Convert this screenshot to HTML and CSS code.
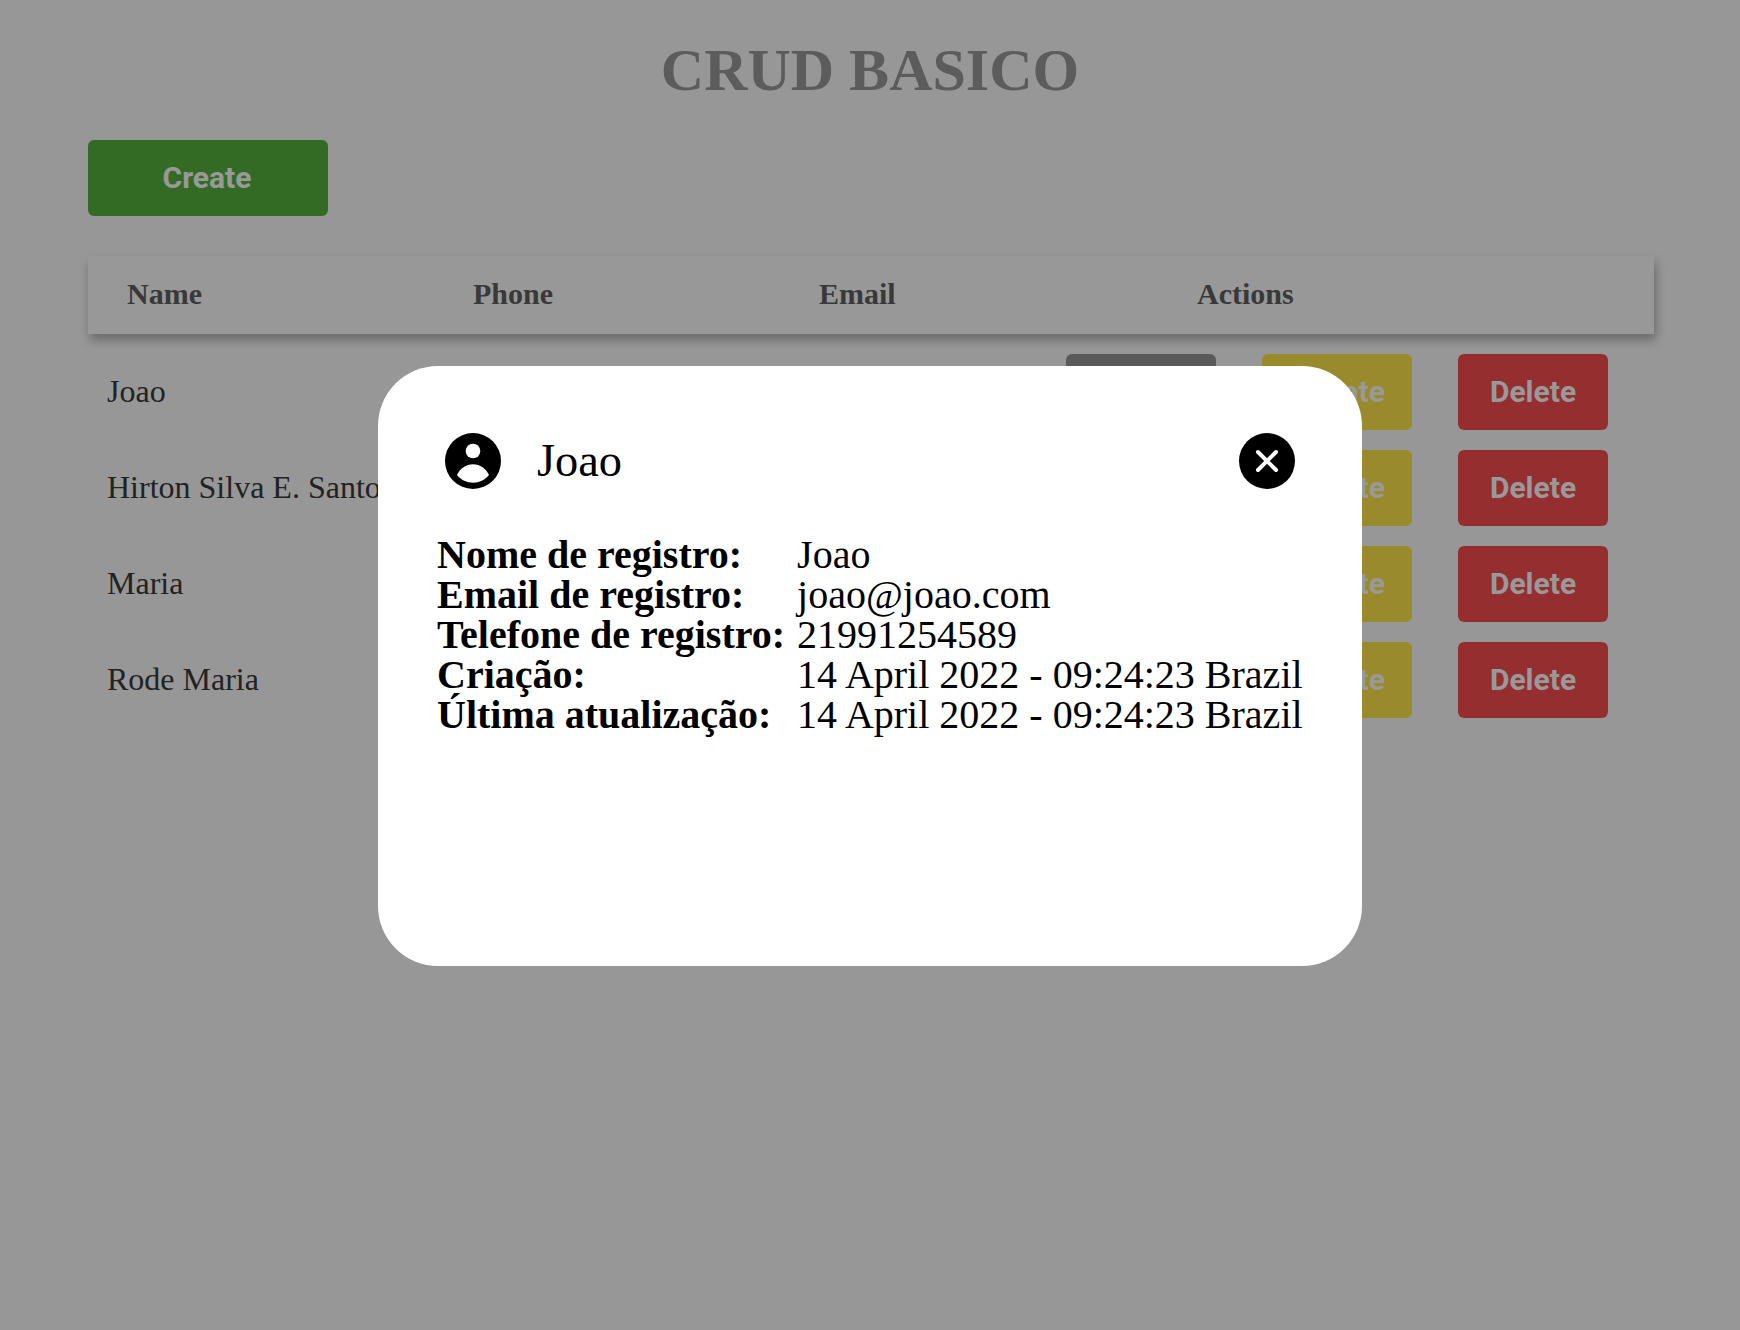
FILE: index.html
```html
<!DOCTYPE html>
<html lang="en">
<head>
    <meta charset="UTF-8">
    <meta name="viewport" content="width=device-width, initial-scale=1.0">
    <title>CRUD BASICO</title>
    <link rel="stylesheet" href="styles.css">
</head>
<body>
    <div class="container">
        <h1>CRUD BASICO</h1>
        <button class="btn btn-create">Create</button>

        <div class="list-header">
            <span>Name</span>
            <span>Phone</span>
            <span>Email</span>
            <span>Actions</span>
        </div>

        <div class="list-row">
            <span class="row-name">Joao</span>
            <div class="actions">
                <button class="btn btn-details" aria-label="Details"></button>
                <button class="btn btn-update">Update</button>
                <button class="btn btn-delete">Delete</button>
            </div>
        </div>
        <div class="list-row">
            <span class="row-name">Hirton Silva E. Santos</span>
            <div class="actions">
                <button class="btn btn-details" aria-label="Details"></button>
                <button class="btn btn-update">Update</button>
                <button class="btn btn-delete">Delete</button>
            </div>
        </div>
        <div class="list-row">
            <span class="row-name">Maria</span>
            <div class="actions">
                <button class="btn btn-details" aria-label="Details"></button>
                <button class="btn btn-update">Update</button>
                <button class="btn btn-delete">Delete</button>
            </div>
        </div>
        <div class="list-row">
            <span class="row-name">Rode Maria</span>
            <div class="actions">
                <button class="btn btn-details" aria-label="Details"></button>
                <button class="btn btn-update">Update</button>
                <button class="btn btn-delete">Delete</button>
            </div>
        </div>
    </div>

    <div class="overlay">
        <div class="modal">
            <div class="modal-header">
                <svg class="modal-icon" viewBox="0 0 56 56">
                    <circle cx="28" cy="28" r="28" fill="#000"/>
                    <circle cx="28" cy="18" r="7.3" fill="#fff"/>
                    <path d="M12 42C15 35.5 21 31.3 28 31.3S41 35.5 44 42C40 47 34 49.7 28 49.7S16 47 12 42Z" fill="#fff"/>
                </svg>
                <span class="modal-name">Joao</span>
                <button class="modal-close">
                    <svg class="modal-icon" viewBox="0 0 56 56">
                        <circle cx="28" cy="28" r="28" fill="#000"/>
                        <path d="M19 19L37 37M37 19L19 37" stroke="#fff" stroke-width="4" stroke-linecap="round"/>
                    </svg>
                </button>
            </div>
            <table class="modal-info">
                <tr><th>Nome de registro:</th><td>Joao</td></tr>
                <tr><th>Email de registro:</th><td>joao@joao.com</td></tr>
                <tr><th>Telefone de registro:</th><td>21991254589</td></tr>
                <tr><th>Criação:</th><td>14 April 2022 - 09:24:23 Brazil</td></tr>
                <tr><th>Última atualização:</th><td>14 April 2022 - 09:24:23 Brazil</td></tr>
            </table>
        </div>
    </div>
</body>
</html>
```

FILE: styles.css
```css
* {
    box-sizing: border-box;
}
body {
    font-family: "Liberation Serif", serif;
    background-color: #fcfcfc;
    margin: 0;
    height: 100vh;
}
.container {
    width: 1566px;
    margin-left: 88px;
}
h1 {
    font-size: 60px;
    line-height: 64px;
    text-align: center;
    color: #999;
    margin: 0 0 0 -2px;
    padding: 38px 0;
}
.btn {
    font-family: Roboto, sans-serif;
    font-weight: 700;
    font-size: 30px;
    color: #fff;
    width: 150px;
    height: 76px;
    border: none;
    border-radius: 6px;
    padding: 0 0 2px;
}
.btn-create {
    display: block;
    width: 240px;
    background-color: #55b23f;
    padding-right: 2px;
}
.btn-details {
    background-color: #969696;
}
.btn-update {
    background-color: #ffe648;
}
.btn-delete {
    background-color: #f84d4d;
}
.list-header, .list-row {
    display: grid;
    align-items: center;
}
.list-header {
    grid-template-columns: 346px 346px 378px 1fr;
    height: 78px;
    margin-top: 40px;
    margin-bottom: 20px;
    padding-left: 39px;
    padding-bottom: 2px;
    font-size: 30px;
    font-weight: 700;
    color: #606060;
    background-color: #fdfdfd;
    box-shadow: 2px 6px 10px rgba(0, 0, 0, 0.3);
}
.list-row {
    grid-template-columns: 1fr auto;
    height: 76px;
    margin-bottom: 20px;
    padding-left: 19px;
    padding-right: 46px;
    font-size: 32px;
    color: #393939;
}
.row-name {
    padding-bottom: 2px;
}
.list-row .actions {
    display: flex;
    gap: 46px;
}
.overlay {
    position: fixed;
    top: 0;
    left: 0;
    width: 100%;
    height: 100%;
    background-color: rgba(0, 0, 0, 0.4);
    display: flex;
    justify-content: center;
    align-items: center;
}
.modal {
    width: 984px;
    height: 600px;
    margin-top: 2px;
    background-color: #fff;
    border-radius: 60px;
    padding: 60px;
}
.modal-header {
    display: flex;
    align-items: center;
    padding: 7px;
    margin-bottom: 39px;
}
.modal-icon {
    display: block;
    width: 56px;
    height: 56px;
}
.modal-name {
    font-size: 46.4px;
    margin-left: 36px;
    padding-bottom: 2px;
}
.modal-close {
    margin-left: auto;
    padding: 0;
    border: none;
    background: none;
}
.modal-info {
    border-collapse: collapse;
    font-size: 40px;
    line-height: 40px;
    color: #000;
    margin-left: -1px;
}
.modal-info th, .modal-info td {
    padding: 0;
    text-align: left;
    white-space: nowrap;
}
.modal-info th {
    padding-right: 12px;
}
```
